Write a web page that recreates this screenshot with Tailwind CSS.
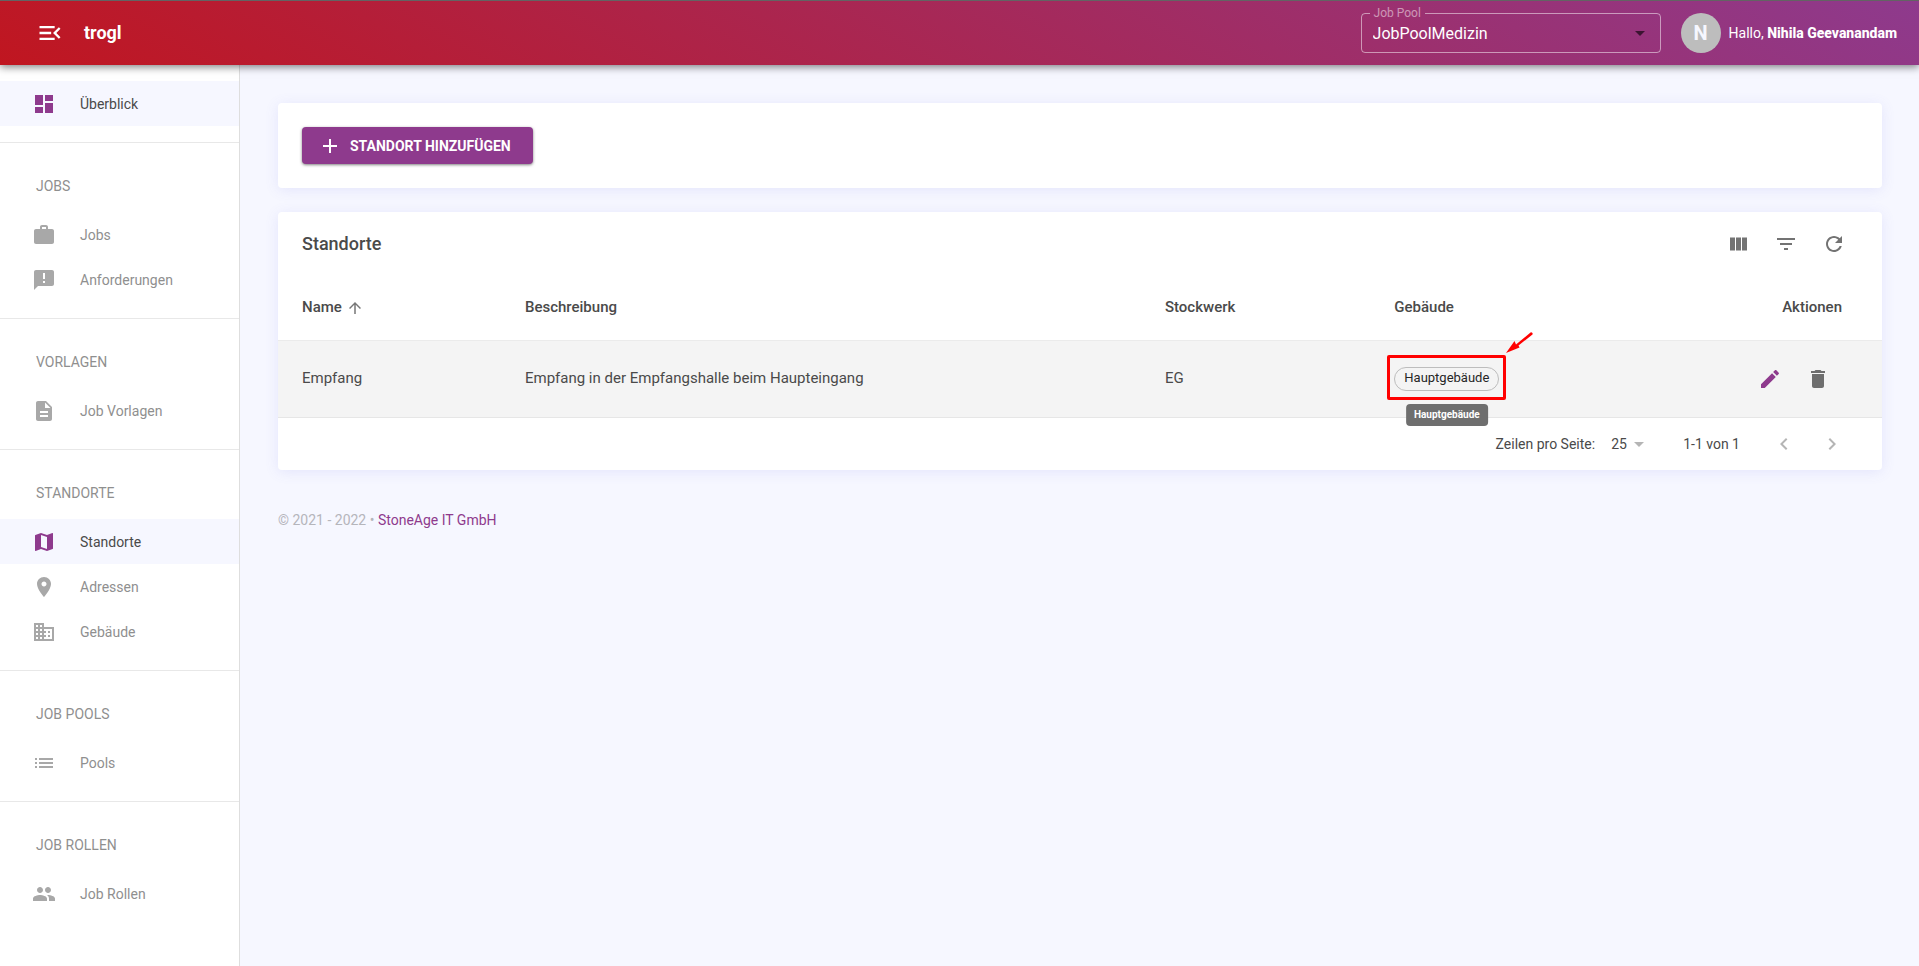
<!DOCTYPE html>
<html lang="de">
<head>
<meta charset="utf-8">
<meta name="viewport" content="width=device-width, initial-scale=1">
<title>trogl – Standorte</title>
<script src="https://cdn.jsdelivr.net/npm/@tailwindcss/browser@4"></script>
</head>
<body class="flex min-h-screen flex-col bg-[#f6f7ff] font-['Roboto',sans-serif] text-sm text-[#4a4a4a]">

<header class="relative z-10 flex h-[65px] items-center border-t border-[#636363] bg-[linear-gradient(30deg,#c01620,#8e3a8d)] pr-[22px] pl-9 text-white shadow-[0_2px_8px_rgba(0,0,0,0.5)]">
  <button type="button" aria-label="Menü einklappen">
    <svg class="size-7" viewBox="0 0 24 24" fill="currentColor"><path d="M3 18h13v-2H3v2zm0-5h10v-2H3v2zm0-7v2h13V6H3zm18 9.59L17.42 12 21 8.41 19.59 7l-5 5 5 5L21 15.59z"/></svg>
  </button>
  <a href="#" class="ml-5 text-lg leading-6 font-bold">trogl</a>
  <fieldset class="relative mt-[5px] ml-auto h-[47px] w-[300px] self-start rounded border border-white/50 px-2">
    <legend class="px-1 text-xs leading-[14px] text-white/50"><label for="pool">Job Pool</label></legend>
    <select id="pool" class="h-7 w-full appearance-none pl-[3px] text-base leading-7 text-white outline-none"><option>JobPoolMedizin</option></select>
    <svg class="pointer-events-none absolute top-[1px] right-2 size-6 text-black/60" viewBox="0 0 24 24" fill="currentColor"><path d="M7 10l5 5 5-5z"/></svg>
  </fieldset>
  <div class="ml-5 flex items-center gap-2">
    <span class="flex size-10 items-center justify-center rounded-full bg-[#bdbdbd] text-xl font-bold text-[#f6f7ff]">N</span>
    <span>Hallo, <b class="font-extrabold">Nihila Geevanandam</b></span>
  </div>
</header>

<div class="flex flex-1">
  <nav class="w-60 shrink-0 divide-y divide-[#e8e8e8] border-r border-[#dedede] bg-white text-[#8f8f8f]">
    <div class="py-4">
      <a href="#" class="flex h-[45px] items-center gap-6 bg-[#f6f7ff] pl-8 text-[#4a4a4a]">
        <svg class="size-6 text-[#8e3a8d]" viewBox="0 0 24 24" fill="currentColor"><path d="M3 13h8V3H3v10zm0 8h8v-6H3v6zm10 0h8V11h-8v10zm0-18v6h8V3h-8z"/></svg>Überblick</a>
    </div>
    <div class="py-4">
      <h2 class="flex h-[53px] items-center pl-9">JOBS</h2>
      <a href="#" class="flex h-[45px] items-center gap-6 pl-8">
        <svg class="size-6 text-[#a8a8a8]" viewBox="0 0 24 24" fill="currentColor"><path d="M20 6h-4V4c0-1.11-.89-2-2-2h-4c-1.11 0-2 .89-2 2v2H4c-1.11 0-1.99.89-1.99 2L2 19c0 1.11.89 2 2 2h16c1.11 0 2-.89 2-2V8c0-1.11-.89-2-2-2zm-6 0h-4V4h4v2z"/></svg>Jobs</a>
      <a href="#" class="flex h-[45px] items-center gap-6 pl-8">
        <svg class="size-6 text-[#a8a8a8]" viewBox="0 0 24 24" fill="currentColor"><path d="M20 2H4c-1.1 0-1.99.9-1.99 2L2 22l4-4h14c1.1 0 2-.9 2-2V4c0-1.1-.9-2-2-2zm-7 13h-2v-2h2v2zm0-4h-2V5h2v6z"/></svg>Anforderungen</a>
    </div>
    <div class="py-4">
      <h2 class="flex h-[53px] items-center pl-9">VORLAGEN</h2>
      <a href="#" class="flex h-[45px] items-center gap-6 pl-8">
        <svg class="size-6 text-[#a8a8a8]" viewBox="0 0 24 24" fill="currentColor"><path d="M14 2H6c-1.1 0-1.99.9-1.99 2L4 20c0 1.1.89 2 1.99 2H18c1.1 0 2-.9 2-2V8l-6-6zm2 16H8v-2h8v2zm0-4H8v-2h8v2zm-3-5V3.5L18.500 9H13z"/></svg>Job Vorlagen</a>
    </div>
    <div class="py-4">
      <h2 class="flex h-[53px] items-center pl-9">STANDORTE</h2>
      <a href="#" aria-current="page" class="flex h-[45px] items-center gap-6 bg-[#f6f7ff] pl-8 text-[#4a4a4a]">
        <svg class="size-6 text-[#8e3a8d]" viewBox="0 0 24 24" fill="currentColor"><path d="M20.500 3l-.16.03L15 5.100 9 3 3.360 4.900c-.21.07-.36.25-.36.48V20.500c0 .28.22.5.5.5l.16-.03L9 18.900l6 2.100 5.640-1.900c.21-.07.36-.25.36-.48V3.500c0-.28-.22-.5-.5-.5zM15 19l-6-2.110V5l6 2.110V19z"/></svg>Standorte</a>
      <a href="#" class="flex h-[45px] items-center gap-6 pl-8">
        <svg class="size-6 text-[#a8a8a8]" viewBox="0 0 24 24" fill="currentColor"><path d="M12 2C8.130 2 5 5.130 5 9c0 5.250 7 13 7 13s7-7.750 7-13c0-3.870-3.130-7-7-7zm0 9.500c-1.380 0-2.500-1.120-2.500-2.500s1.120-2.500 2.500-2.500 2.500 1.120 2.500 2.500-1.120 2.500-2.500 2.500z"/></svg>Adressen</a>
      <a href="#" class="flex h-[45px] items-center gap-6 pl-8">
        <svg class="size-6 text-[#a8a8a8]" viewBox="0 0 24 24" fill="currentColor"><path d="M12 7V3H2v18h20V7H12zM6 19H4v-2h2v2zm0-4H4v-2h2v2zm0-4H4V9h2v2zm0-4H4V5h2v2zm4 12H8v-2h2v2zm0-4H8v-2h2v2zm0-4H8V9h2v2zm0-4H8V5h2v2zm10 12h-8v-2h2v-2h-2v-2h2v-2h-2V9h8v10zm-2-8h-2v2h2v-2zm0 4h-2v2h2v-2z"/></svg>Gebäude</a>
    </div>
    <div class="py-4">
      <h2 class="flex h-[53px] items-center pl-9">JOB POOLS</h2>
      <a href="#" class="flex h-[45px] items-center gap-6 pl-8">
        <svg class="size-6 text-[#a8a8a8]" viewBox="0 0 24 24" fill="currentColor"><path d="M3 13h2v-2H3v2zm0 4h2v-2H3v2zm0-8h2V7H3v2zm4 4h14v-2H7v2zm0 4h14v-2H7v2zM7 7v2h14V7H7z"/></svg>Pools</a>
    </div>
    <div class="py-4">
      <h2 class="flex h-[53px] items-center pl-9">JOB ROLLEN</h2>
      <a href="#" class="flex h-[45px] items-center gap-6 pl-8">
        <svg class="size-6 text-[#a8a8a8]" viewBox="0 0 24 24" fill="currentColor"><path d="M16 11c1.660 0 2.990-1.340 2.990-3S17.660 5 16 5c-1.660 0-3 1.340-3 3s1.340 3 3 3zm-8 0c1.660 0 2.990-1.340 2.990-3S9.660 5 8 5C6.340 5 5 6.340 5 8s1.340 3 3 3zm0 2c-2.330 0-7 1.170-7 3.500V19h14v-2.500c0-2.330-4.670-3.500-7-3.500zm8 0c-.29 0-.62.02-.97.05 1.160.84 1.970 1.970 1.970 3.450V19h6v-2.500c0-2.330-4.670-3.500-7-3.500z"/></svg>Job Rollen</a>
    </div>
  </nav>

  <main class="min-w-0 flex-1 pt-[38px] pr-[37px] pl-[38px]">
    <section class="rounded bg-white p-6 shadow-[0_2px_14px_rgba(100,100,230,0.12)]">
      <button type="button" class="flex h-[37px] items-center gap-2 rounded bg-[#8e3a8d] pr-[22px] pl-4 font-bold text-white shadow-[0_1px_3px_rgba(0,0,0,0.5)]">
        <svg class="size-6" viewBox="0 0 24 24" fill="currentColor"><path d="M19 13h-6v6h-2v-6H5v-2h6V5h2v6h6v2z"/></svg>STANDORT HINZUFÜGEN</button>
    </section>

    <section class="mt-6 rounded bg-white shadow-[0_2px_14px_rgba(100,100,230,0.12)]">
      <div class="flex h-16 items-center px-6">
        <h1 class="text-lg font-medium">Standorte</h1>
        <div class="ml-auto flex text-[#737373]">
          <button type="button" aria-label="Spalten" class="flex size-12 items-center justify-center"><svg class="size-6" viewBox="0 0 24 24" fill="currentColor"><path d="M4 5.500h5v13H4zM10 5.500h5v13h-5zM16 5.500h5v13h-5z"/></svg></button>
          <button type="button" aria-label="Filter" class="flex size-12 items-center justify-center"><svg class="size-6" viewBox="0 0 24 24" fill="currentColor"><path d="M10 18h4v-2h-4v2zM3 6v2h18V6H3zm3 7h12v-2H6v2z"/></svg></button>
          <button type="button" aria-label="Aktualisieren" class="flex size-12 items-center justify-center"><svg class="size-6" viewBox="0 0 24 24" fill="currentColor"><path d="M17.650 6.350C16.200 4.900 14.210 4 12 4c-4.420 0-7.990 3.580-7.990 8s3.570 8 7.990 8c3.730 0 6.840-2.550 7.730-6h-2.080c-.82 2.330-3.040 4-5.650 4-3.310 0-6-2.690-6-6s2.690-6 6-6c1.660 0 3.140.69 4.220 1.780L13 11h7V4l-2.350 2.350z"/></svg></button>
        </div>
      </div>

      <table class="w-full table-fixed text-left text-[15px]">
        <thead>
          <tr class="h-16 border-b border-[#ebebeb] text-[#4a4a4a]">
            <th class="w-[13.9%] pl-6 font-medium"><button type="button" class="flex items-center gap-1">Name<svg class="size-[18px] text-[#777]" viewBox="0 0 24 24" fill="currentColor"><path d="M4 12l1.410 1.410L11 7.830V20h2V7.830l5.580 5.590L20 12l-8-8-8 8z"/></svg></button></th>
            <th class="w-[39.9%] pl-6 font-medium">Beschreibung</th>
            <th class="w-[14.3%] pl-6 font-medium">Stockwerk</th>
            <th class="pl-6 font-medium">Gebäude</th>
            <th class="pr-10 text-right font-medium">Aktionen</th>
          </tr>
        </thead>
        <tbody>
          <tr class="h-[77px] border-b border-[#e6e6e6] bg-[#f4f4f4]">
            <td class="pl-6">Empfang</td>
            <td class="pl-6">Empfang in der Empfangshalle beim Haupteingang</td>
            <td class="pl-6">EG</td>
            <td class="pl-6">
              <div class="relative inline-block align-middle">
                <span class="flex h-6 items-center rounded-full border border-[#bdbdbd] px-[9px] text-[13px] text-[#262626]">Hauptgebäude</span>
                <span class="absolute -inset-x-[7px] -top-3 -bottom-[9px] rounded-xs border-3 border-[#ff0000]"></span>
                <svg class="absolute -top-[37px] left-full ml-[6px] h-6 w-[30px]" viewBox="0 0 30 24" fill="#ff0000"><path d="M1 23L9.500 11l1.500 3.500L25.500 2.500a1.500 1.500 0 0 1 2 2L13.500 15.500l1 2z"/></svg>
                <span role="tooltip" class="absolute top-[37px] left-1/2 -translate-x-1/2 rounded bg-[#6e6e6e] px-2 text-[10px] leading-[22px] font-bold text-white">Hauptgebäude</span>
              </div>
            </td>
            <td class="pr-10">
              <div class="flex justify-end">
                <button type="button" aria-label="Bearbeiten" class="flex size-12 items-center justify-center text-[#8e3a8d]"><svg class="size-6" viewBox="0 0 24 24" fill="currentColor"><path d="M3 17.250V21h3.750L17.810 9.940l-3.750-3.750L3 17.250zM20.710 7.040c.39-.39.39-1.020 0-1.410l-2.340-2.340c-.39-.39-1.020-.39-1.410 0l-1.830 1.830 3.750 3.750 1.830-1.830z"/></svg></button>
                <button type="button" aria-label="Löschen" class="flex size-12 items-center justify-center text-[#6e6e6e]"><svg class="size-6" viewBox="0 0 24 24" fill="currentColor"><path d="M6 19c0 1.100.9 2 2 2h8c1.100 0 2-.9 2-2V7H6v12zM19 4h-3.500l-1-1h-5l-1 1H5v2h14V4z"/></svg></button>
              </div>
            </td>
          </tr>
        </tbody>
      </table>

      <div class="flex h-[52px] items-center justify-end pr-[26px]">
        <label for="rows">Zeilen pro Seite:</label>
        <div class="relative ml-2 flex">
          <select id="rows" class="h-6 w-14 appearance-none pl-2 outline-none"><option>25</option></select>
          <svg class="pointer-events-none absolute top-0 right-2 size-6 text-[#b5b5b5]" viewBox="0 0 24 24" fill="currentColor"><path d="M7 10l5 5 5-5z"/></svg>
        </div>
        <span class="ml-6">1-1 von 1</span>
        <div class="ml-5 flex text-[#b5b5b5]">
          <button type="button" aria-label="Vorherige Seite" class="flex size-12 items-center justify-center"><svg class="size-6" viewBox="0 0 24 24" fill="currentColor"><path d="M15.410 7.410L14 6l-6 6 6 6 1.410-1.410L10.830 12z"/></svg></button>
          <button type="button" aria-label="Nächste Seite" class="flex size-12 items-center justify-center"><svg class="size-6" viewBox="0 0 24 24" fill="currentColor"><path d="M10 6L8.590 7.410 13.170 12l-4.580 4.590L10 18l6-6z"/></svg></button>
        </div>
      </div>
    </section>

    <footer class="mt-10 text-[#b5b5bb]">© 2021 - 2022 • <a href="#" class="text-[#8e3a8d]">StoneAge IT GmbH</a></footer>
  </main>
</div>
</body>
</html>
